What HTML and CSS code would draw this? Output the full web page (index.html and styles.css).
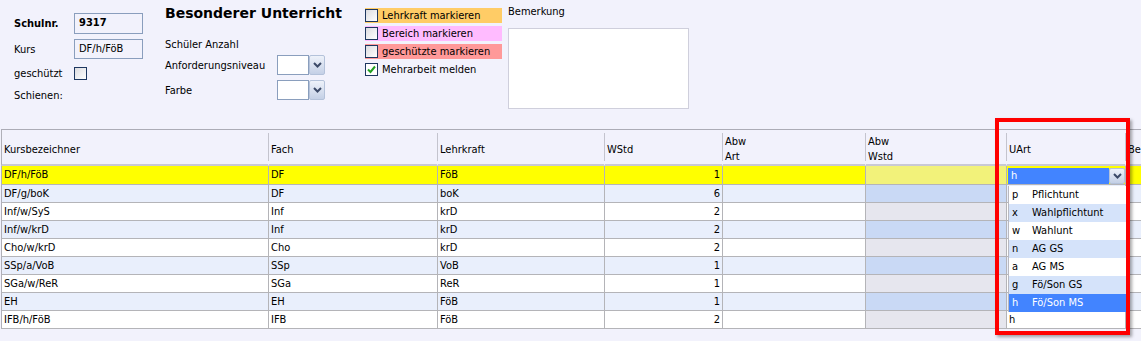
FILE: index.html
```html
<!DOCTYPE html>
<html lang="de">
<head>
  <meta charset="UTF-8">
  <title>Besonderer Unterricht</title>
  <link rel="stylesheet" href="styles.css">
</head>
<body>
  <div class="top">
    <div class="fields">
      <div class="field-row r1">
        <span class="label bold">Schulnr.</span>
        <div class="input bold">9317</div>
      </div>
      <div class="field-row r2">
        <span class="label">Kurs</span>
        <div class="input">DF/h/FöB</div>
      </div>
      <div class="field-row r3">
        <span class="label">geschützt</span>
        <span class="check"></span>
      </div>
      <div class="field-row r4">
        <span class="label">Schienen:</span>
      </div>
    </div>

    <div class="unterricht">
      <h2>Besonderer Unterricht</h2>
      <div class="u-row anzahl">Schüler Anzahl</div>
      <div class="u-row sel-row">
        <span class="u-label">Anforderungsniveau</span>
        <div class="select">
          <span class="select-box"></span>
          <span class="select-btn"><svg width="9" height="6" viewBox="0 0 9 6"><path d="M1 1 L4.5 4.5 L8 1" fill="none" stroke="#3c4a68" stroke-width="2"/></svg></span>
        </div>
      </div>
      <div class="u-row sel-row farbe">
        <span class="u-label">Farbe</span>
        <div class="select">
          <span class="select-box"></span>
          <span class="select-btn"><svg width="9" height="6" viewBox="0 0 9 6"><path d="M1 1 L4.5 4.5 L8 1" fill="none" stroke="#3c4a68" stroke-width="2"/></svg></span>
        </div>
      </div>
    </div>

    <div class="marks">
      <div class="mark orange"><span class="check"></span>Lehrkraft markieren</div>
      <div class="mark pink"><span class="check"></span>Bereich markieren</div>
      <div class="mark red"><span class="check"></span>geschützte markieren</div>
      <div class="mark"><span class="check checked"><svg width="11" height="11" viewBox="0 0 11 11"><path d="M2 5.5 L4.5 8 L9 2.5" fill="none" stroke="#22a022" stroke-width="2"/></svg></span>Mehrarbeit melden</div>
    </div>

    <div class="remark">
      <div class="remark-label">Bemerkung</div>
      <div class="remark-box"></div>
    </div>
  </div>

  <table class="grid">
    <colgroup>
      <col style="width: 268px">
      <col style="width: 169px">
      <col style="width: 167px">
      <col style="width: 118px">
      <col style="width: 143px">
      <col style="width: 141px">
      <col style="width: 119px">
      <col style="width: 200px">
    </colgroup>
    <thead>
      <tr>
        <th>Kursbezeichner</th>
        <th>Fach</th>
        <th>Lehrkraft</th>
        <th>WStd</th>
        <th>Abw<br>Art</th>
        <th>Abw<br>Wstd</th>
        <th>UArt</th>
        <th>Bem</th>
      </tr>
    </thead>
    <tbody>
      <tr class="row-y first">
        <td>DF/h/FöB</td><td>DF</td><td>FöB</td><td class="num">1</td><td></td><td class="dark"></td>
        <td class="uart">
          <div class="combo">
            <div class="combo-field">h</div>
            <div class="combo-btn"><svg width="9" height="6" viewBox="0 0 9 6"><path d="M1 1 L4.5 4.5 L8 1" fill="none" stroke="#3c4a68" stroke-width="2"/></svg></div>
            <ul class="dropdown">
              <li><span class="key">p</span>Pflichtunt</li>
              <li class="alt"><span class="key">x</span>Wahlpflichtunt</li>
              <li><span class="key">w</span>Wahlunt</li>
              <li class="alt"><span class="key">n</span>AG GS</li>
              <li><span class="key">a</span>AG MS</li>
              <li class="alt"><span class="key">g</span>Fö/Son GS</li>
              <li class="selected"><span class="key">h</span>Fö/Son MS</li>
            </ul>
          </div>
        </td>
        <td></td>
      </tr>
      <tr class="row-b"><td>DF/g/boK</td><td>DF</td><td>boK</td><td class="num">6</td><td></td><td class="dark"></td><td></td><td></td></tr>
      <tr class="row-w"><td>Inf/w/SyS</td><td>Inf</td><td>krD</td><td class="num">2</td><td></td><td class="dark"></td><td></td><td></td></tr>
      <tr class="row-b"><td>Inf/w/krD</td><td>Inf</td><td>krD</td><td class="num">2</td><td></td><td class="dark"></td><td></td><td></td></tr>
      <tr class="row-w"><td>Cho/w/krD</td><td>Cho</td><td>krD</td><td class="num">2</td><td></td><td class="dark"></td><td></td><td></td></tr>
      <tr class="row-b"><td>SSp/a/VoB</td><td>SSp</td><td>VoB</td><td class="num">1</td><td></td><td class="dark"></td><td></td><td></td></tr>
      <tr class="row-w"><td>SGa/w/ReR</td><td>SGa</td><td>ReR</td><td class="num">1</td><td></td><td class="dark"></td><td></td><td></td></tr>
      <tr class="row-b"><td>EH</td><td>EH</td><td>FöB</td><td class="num">1</td><td></td><td class="dark"></td><td></td><td></td></tr>
      <tr class="row-w"><td>IFB/h/FöB</td><td>IFB</td><td>FöB</td><td class="num">2</td><td></td><td class="dark"></td><td>h</td><td></td></tr>
    </tbody>
  </table>

  <div class="highlight"></div>
</body>
</html>
```

FILE: styles.css
```css
* {
  box-sizing: border-box;
}

html, body {
  height: 100%;
}

body {
  margin: 0;
  background: #f2f2fc;
  color: #000;
  font-family: "DejaVu Sans Condensed", "Liberation Sans", sans-serif;
  font-size: 11px;
  overflow: hidden;
}

.bold {
  font-weight: bold;
}

/* top panel */

.top {
  display: flex;
  height: 129px;
  padding-left: 14px;
}

.fields {
  width: 151px;
  padding-top: 13px;
}

.field-row {
  display: flex;
  align-items: center;
}

.field-row .label {
  width: 60px;
}

.r1 { height: 21px; margin-bottom: 5px; }
.r2 { height: 20px; margin-bottom: 7px; }
.r3 { height: 14px; margin-bottom: 8px; }
.r4 { height: 14px; }

.input {
  width: 69px;
  height: 100%;
  border: 1px solid #8a9ebd;
  padding: 0 4px;
  line-height: 18px;
}

.check {
  display: inline-flex;
  align-items: center;
  justify-content: center;
  width: 13px;
  height: 13px;
  border: 1px solid #1e3760;
  background: linear-gradient(135deg, #dcdce0, #ffffff);
  flex-shrink: 0;
}

.checked {
  background: #fff;
}

.unterricht {
  width: 200px;
  padding-top: 4px;
}

.unterricht h2 {
  margin: 0 0 13px;
  font-size: 14px;
  line-height: 18px;
  font-family: "DejaVu Sans", "Liberation Sans", sans-serif;
  font-weight: bold;
}

.u-row {
  display: flex;
  align-items: center;
}

.anzahl {
  height: 18px;
  margin-bottom: 2px;
}

.sel-row {
  height: 20px;
}

.farbe {
  margin-top: 5px;
}

.u-label {
  width: 112px;
}

.select {
  display: flex;
  width: 48px;
  height: 20px;
}

.select-box {
  flex: 1;
  background: #fff;
  border: 1px solid #8a9ebd;
}

.select-btn,
.combo-btn {
  width: 16px;
  display: flex;
  align-items: center;
  justify-content: center;
  border: 1px solid #b4c2da;
  border-radius: 2px;
  background: linear-gradient(#eef2fa, #c4d0e6);
}

.marks {
  width: 143px;
  padding-top: 8px;
  display: flex;
  flex-direction: column;
  gap: 3px;
}

.mark {
  display: flex;
  align-items: center;
  gap: 4px;
  width: 137px;
  height: 15px;
}

.orange { background: #ffcc66; }
.pink { background: #ffbbff; }
.red { background: #ff9999; }

.remark {
  padding-top: 5px;
}

.remark-label {
  height: 14px;
  line-height: 14px;
  margin-bottom: 9px;
}

.remark-box {
  width: 181px;
  height: 81px;
  background: #fff;
  border: 1px solid #cfcfdc;
}

/* grid */

.grid {
  table-layout: fixed;
  width: 1325px;
  margin-left: 1px;
  border-collapse: separate;
  border-spacing: 0;
  border-top: 1px solid #acacb6;
}

.grid th {
  height: 35px;
  padding: 4px 2px 0;
  text-align: left;
  font-weight: normal;
  vertical-align: middle;
  line-height: 15px;
  border-bottom: 2px solid #c9c9d4;
  border-right: 1px solid transparent;
  background: linear-gradient(#c4c4ce, #c4c4ce) no-repeat right 3px / 1px 28px;
  background-origin: border-box;
  white-space: nowrap;
  overflow: hidden;
}

.grid th:first-child,
.grid td:first-child {
  border-left: 1px solid #b0b0b8;
}

.grid td {
  height: 18px;
  padding: 0 2px;
  line-height: 17px;
  border-right: 1px solid #b4b4b8;
  border-bottom: 1px solid #b4b4b8;
  white-space: nowrap;
}

.grid tr.first td {
  height: 19px;
  line-height: 18px;
}

.grid td.num {
  text-align: right;
}

.row-y td { background: #ffff00; }
.row-y td.dark { background: #f2f27a; }
.row-b td { background: #e9effc; }
.row-b td.dark { background: #c9d9f5; }
.row-w td { background: #fff; }
.row-w td.dark { background: #e6e6ee; }

.grid td.uart {
  padding: 0;
  overflow: visible;
}

.combo {
  position: relative;
  display: flex;
  height: 16px;
  margin: 1px 0 0 1px;
  width: 117px;
}

.combo-field {
  flex: 1;
  background: #4284ff;
  color: #fff;
  padding-left: 3px;
  line-height: 15px;
}

.combo-btn {
  width: 16px;
}

.dropdown {
  position: absolute;
  top: 18px;
  left: 0;
  width: 119px;
  margin: 0;
  padding: 0;
  list-style: none;
  background: #fff;
  border-left: 1px solid #b8b8c0;
  z-index: 2;
}

.dropdown li {
  display: flex;
  height: 18px;
  line-height: 18px;
  padding-left: 3px;
}

.dropdown li.alt {
  background: #d5e3fa;
}

.dropdown li.selected {
  background: #4284ff;
  color: #fff;
}

.key {
  width: 20px;
}

.highlight {
  position: absolute;
  left: 995px;
  top: 118px;
  width: 135px;
  height: 217px;
  border: 4px solid #ff0000;
  box-shadow: 2px 2px 3px rgba(0, 0, 0, 0.35);
  z-index: 3;
}
```
